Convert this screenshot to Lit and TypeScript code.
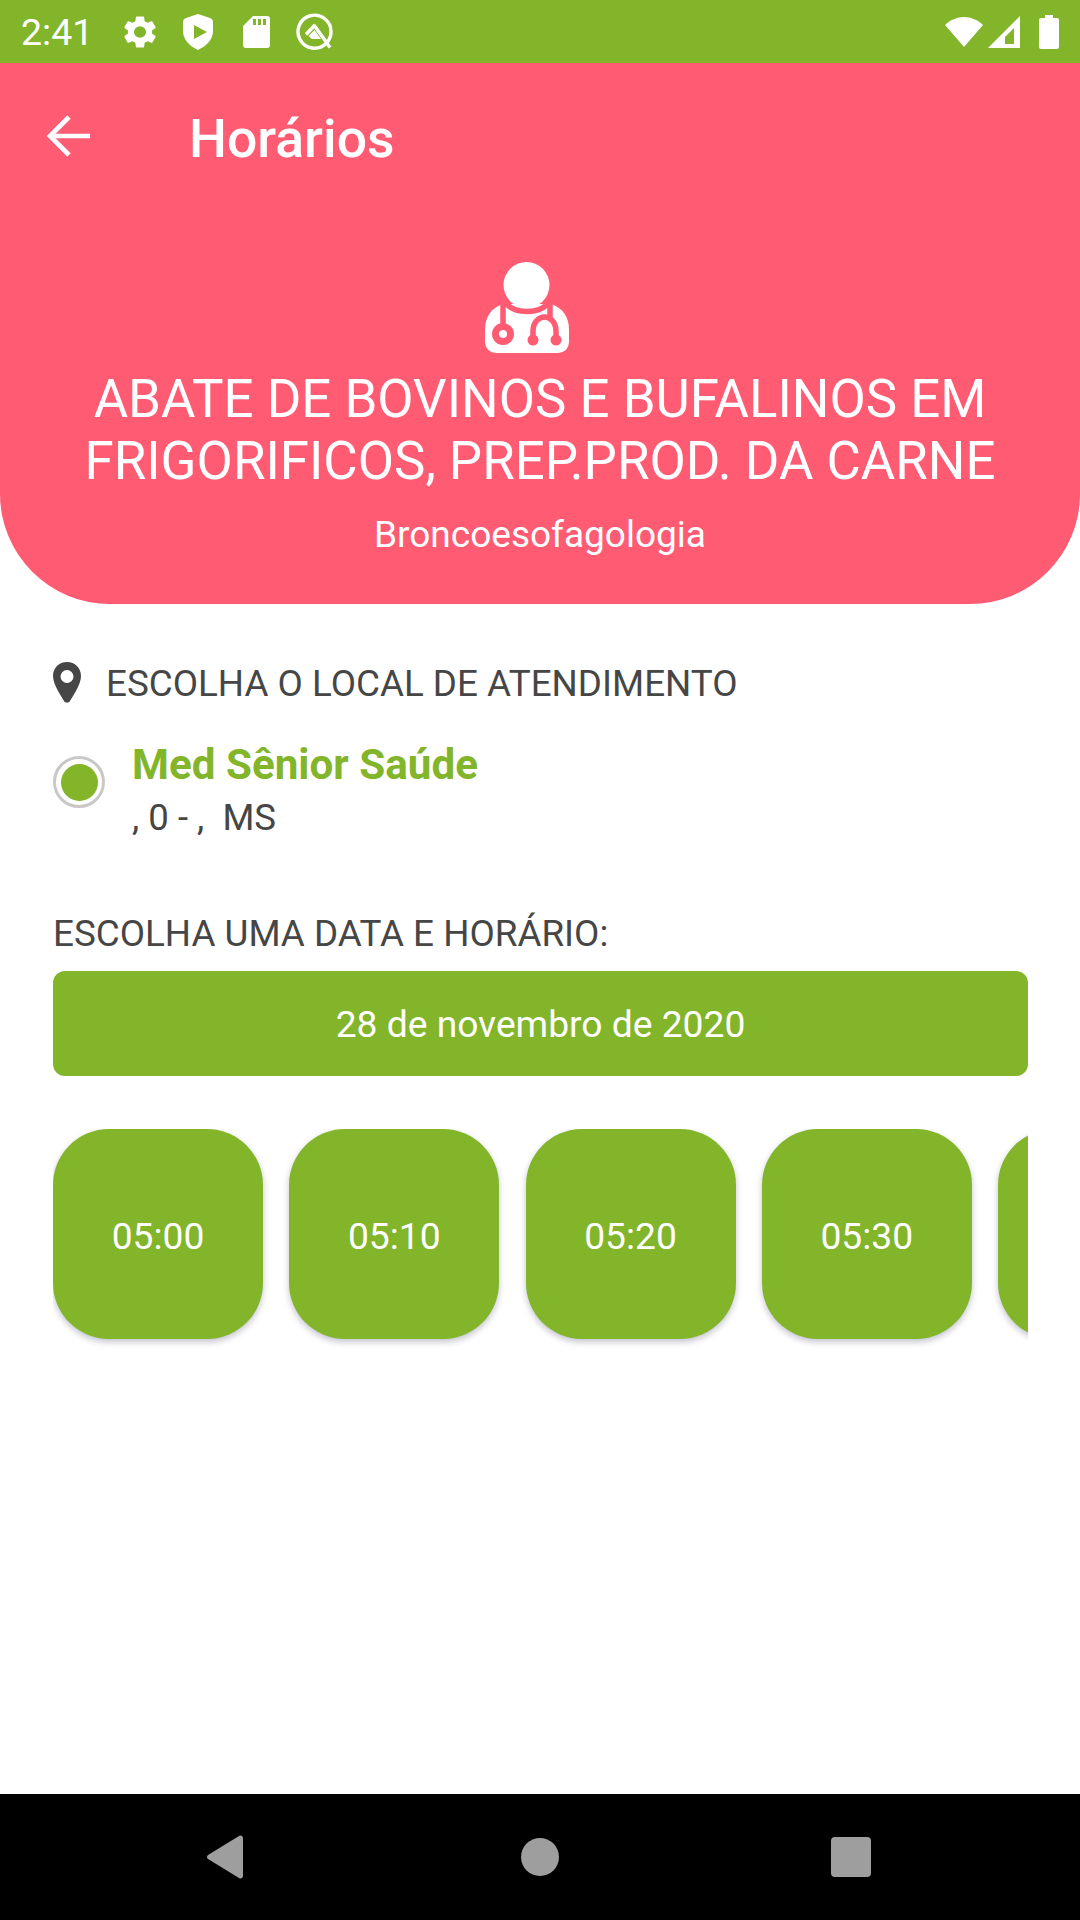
import { LitElement, css, html } from "lit";
import { customElement } from "lit/decorators.js";

const SLOTS = ["05:00", "05:10", "05:20", "05:30", ""];

@customElement("app-root")
export class AppRoot extends LitElement {
  static styles = css`
    :host {
      display: flex;
      flex-direction: column;
      width: 1080px;
      height: 1920px;
      background: #fff;
      font-family: Roboto, "Liberation Sans", sans-serif;
      color: #464646;
      overflow: hidden;
    }
    .status {
      flex: none;
      height: 63px;
      background: #82b52a;
      display: flex;
      align-items: center;
      padding: 0 21px 0 21px;
      color: #fff;
      font-size: 37.5px;
    }
    .status svg { display: block; fill: #fff; }
    .time { width: 103px; }
    .status-left { display: flex; align-items: center; }
    .gear { margin-right: 27px; }
    .shield { margin-right: 30px; }
    .sd { margin-right: 26px; }
    .spacer { flex: 1; }
    .status-right { display: flex; align-items: center; }
    .wifi { margin-right: 5px; }
    .signal { margin-right: 19px; }
    .appbar {
      flex: none;
      height: 144px;
      box-sizing: border-box;
      padding-top: 7px;
      background: #ff5c74;
      display: flex;
      align-items: center;
      color: #fff;
    }
    .back {
      width: 189px;
      padding-left: 46px;
      margin-bottom: 6px;
      box-sizing: border-box;
      display: flex;
    }
    .appbar h1 { margin: 0; font-size: 53.5px; font-weight: 500; }
    .hero {
      flex: none;
      height: 397px;
      box-sizing: border-box;
      background: #ff5c74;
      border-radius: 0 0 110px 110px;
      color: #fff;
      display: flex;
      flex-direction: column;
      align-items: center;
      text-align: center;
      padding-top: 55px;
    }
    .hero svg { display: block; margin-right: 27px; }
    .hero h2 {
      margin: 14px 0 0;
      font-size: 52.8px;
      line-height: 62px;
      font-weight: 400;
    }
    .hero p { margin: 22px 0 0; font-size: 37px; line-height: 42px; }
    .content { flex: 1; padding: 0 52px 0 53px; }
    .label { font-size: 36.8px; line-height: 44px; }
    .place-label {
      display: flex;
      align-items: center;
      gap: 25px;
      margin-top: 58px;
    }
    .place-label svg { margin-top: -3px; }
    .place {
      display: flex;
      align-items: flex-start;
      gap: 27px;
      margin-top: 35px;
    }
    .radio {
      flex: none;
      width: 52px;
      height: 52px;
      margin-top: 15px;
      box-sizing: border-box;
      border: 3px solid #c8c8c8;
      border-radius: 50%;
      display: flex;
      align-items: center;
      justify-content: center;
    }
    .radio span { width: 37px; height: 37px; border-radius: 50%; background: #82b52a; }
    .place-name { color: #82b52a; font-size: 42.2px; font-weight: 700; line-height: 48px; }
    .place-addr { font-size: 36.6px; line-height: 44px; margin-top: 7px; white-space: pre; }
    .date-label { margin-top: 72px; }
    .date {
      margin-top: 15px;
      height: 105px;
      border-radius: 12px;
      background: #82b52a;
      color: #fff;
      font-size: 37.2px;
      display: flex;
      align-items: center;
      justify-content: center;
    }
    .slots {
      display: flex;
      gap: 26.25px;
      overflow: hidden;
      margin-top: 53px;
      padding-bottom: 12px;
    }
    .slot {
      flex: none;
      width: 210px;
      height: 210px;
      border-radius: 56px;
      background: #82b52a;
      color: #fff;
      font-size: 37.2px;
      padding-top: 3px;
      box-sizing: border-box;
      display: flex;
      align-items: center;
      justify-content: center;
      box-shadow: 0 3px 6px rgba(40, 40, 80, 0.28);
    }
    .nav {
      flex: none;
      height: 126px;
      background: #000;
      position: relative;
    }
    .nav svg { position: absolute; left: 0; top: 0; }
  `;

  render() {
    return html`
      <div class="status">
        <div class="time">2:41</div>
        <div class="status-left">
          <svg class="gear" width="32" height="34" viewBox="2.5 1.5 19 21" preserveAspectRatio="none"><path d="M19.14 12.94c.04-.3.06-.61.06-.94s-.02-.64-.07-.94l2.03-1.58a.49.49 0 0 0 .12-.61l-1.92-3.32a.49.49 0 0 0-.59-.22l-2.39.96a7 7 0 0 0-1.62-.94l-.36-2.54a.48.48 0 0 0-.48-.41h-3.84a.47.47 0 0 0-.47.41l-.36 2.54c-.59.24-1.13.57-1.62.94l-2.39-.96a.49.49 0 0 0-.59.22L2.74 8.87a.47.47 0 0 0 .12.61l2.03 1.58c-.05.3-.09.63-.09.94s.02.64.07.94l-2.03 1.58a.49.49 0 0 0-.12.61l1.92 3.32c.12.22.37.29.59.22l2.39-.96c.5.38 1.03.7 1.62.94l.36 2.54c.05.24.24.41.48.41h3.84c.24 0 .44-.17.47-.41l.36-2.54c.59-.24 1.13-.56 1.62-.94l2.39.96c.22.08.47 0 .59-.22l1.92-3.32a.47.47 0 0 0-.12-.61l-2.01-1.58zM12 15.6a3.6 3.6 0 1 1 0-7.2 3.6 3.6 0 0 1 0 7.2z"/></svg>
          <svg class="shield" width="30" height="36" viewBox="0 0 30 36"><path fill-rule="evenodd" d="M15 0 27 4c2 .7 3 2 3 4v9c0 8-6 15-15 19C6 32 0 25 0 17V8c0-2 1-3.300 3-4zM11 11v14l13-7z"/></svg>
          <svg class="sd" width="27" height="32" viewBox="0 0 27 32"><path fill-rule="evenodd" d="M10 0h14a3 3 0 0 1 3 3v26a3 3 0 0 1-3 3H3a3 3 0 0 1-3-3V10zM10 3v6h3V3zM15 3v6h3V3zM20 3v6h3V3z"/></svg>
          <svg width="37" height="37" viewBox="0 0 37 37" style="fill:none;stroke:#fff">
            <path stroke-width="3.4" d="M30 30.500A16.500 16.500 0 1 1 35 18.500q0 6.500-4 11"/>
            <path stroke-width="3.4" d="M19 12 10 21.500M18 12 34 34.500"/>
            <path stroke="none" fill="#fff" d="M12.500 23 18.500 17 25 26h-9z"/>
          </svg>
        </div>
        <div class="spacer"></div>
        <div class="status-right">
          <svg class="wifi" width="38" height="30" viewBox="0 0 38 30"><path d="M0 8C5 3 12 0 19 0s14 3 19 8L19 30z"/></svg>
          <svg class="signal" width="32" height="32" viewBox="0 0 32 32"><path fill-rule="evenodd" d="M32 0v32H0zM26 12 17 21v7h9z"/></svg>
          <svg width="20" height="34" viewBox="0 0 20 34"><path d="M6 0h8v3h4a2 2 0 0 1 2 2v27a2 2 0 0 1-2 2H2a2 2 0 0 1-2-2V5a2 2 0 0 1 2-2h4z"/></svg>
        </div>
      </div>

      <div class="appbar">
        <div class="back">
          <svg width="44" height="42" viewBox="0 0 44 42" fill="none" stroke="#fff" stroke-width="4.6"><path d="M44 21H4M23 2 4 21l19 19"/></svg>
        </div>
        <h1>Horários</h1>
      </div>

      <div class="hero">
        <svg width="84" height="92" viewBox="0 0 84 92">
          <path fill="#fff" d="M18 42C6 46 0 55 0 68v11c0 8 5 12 12 12h60c7 0 12-4 12-12V68c0-13-6-22-18-26z"/>
          <path fill="none" stroke="#ff5c74" stroke-width="5.500" d="M18 36c4 10 14 13.500 24 13.500S62 46 66 36"/>
          <path fill="none" stroke="#ff5c74" stroke-width="5.500" d="M18 38v26M65 38v18"/>
          <circle cx="18" cy="72" r="7.500" fill="#fff" stroke="#ff5c74" stroke-width="7"/>
          <path fill="none" stroke="#ff5c74" stroke-width="5.500" d="M48 78V69c0-9 6-14 11.500-14S71 60 71 69v9"/>
          <circle cx="48" cy="78" r="5.500" fill="#ff5c74"/>
          <circle cx="71" cy="78" r="5.500" fill="#ff5c74"/>
          <circle cx="41.500" cy="23" r="23" fill="#fff"/>
        </svg>
        <h2>ABATE DE BOVINOS E BUFALINOS EM<br />FRIGORIFICOS, PREP.PROD. DA CARNE</h2>
        <p>Broncoesofagologia</p>
      </div>

      <div class="content">
        <div class="label place-label">
          <svg width="28" height="41" viewBox="0 0 28 41"><path fill="#464646" fill-rule="evenodd" d="M14 0C6 0 0 6 0 14c0 9 9 21 11 25 1 2 5 2 6 0 2-4 11-16 11-25C28 6 22 0 14 0zm0 8a6.500 6.500 0 1 1 0 13 6.500 6.500 0 0 1 0-13z"/></svg>
          <span>ESCOLHA O LOCAL DE ATENDIMENTO</span>
        </div>
        <div class="place">
          <div class="radio"><span></span></div>
          <div>
            <div class="place-name">Med Sênior Saúde</div>
            <div class="place-addr">, 0 - ,  MS</div>
          </div>
        </div>
        <div class="label date-label">ESCOLHA UMA DATA E HORÁRIO:</div>
        <div class="date">28 de novembro de 2020</div>
        <div class="slots">
          ${SLOTS.map((s) => html`<div class="slot">${s}</div>`)}
        </div>
      </div>

      <div class="nav">
        <svg width="1080" height="126" viewBox="0 0 1080 126" fill="#9e9e9e">
          <path d="M243 44v38a2.500 2.500 0 0 1-4 2L208 65a2.500 2.500 0 0 1 0-4l31-19a2.500 2.500 0 0 1 4 2z"/>
          <circle cx="540" cy="63" r="19"/>
          <rect x="831" y="43" width="40" height="40" rx="4"/>
        </svg>
      </div>
    `;
  }
}
